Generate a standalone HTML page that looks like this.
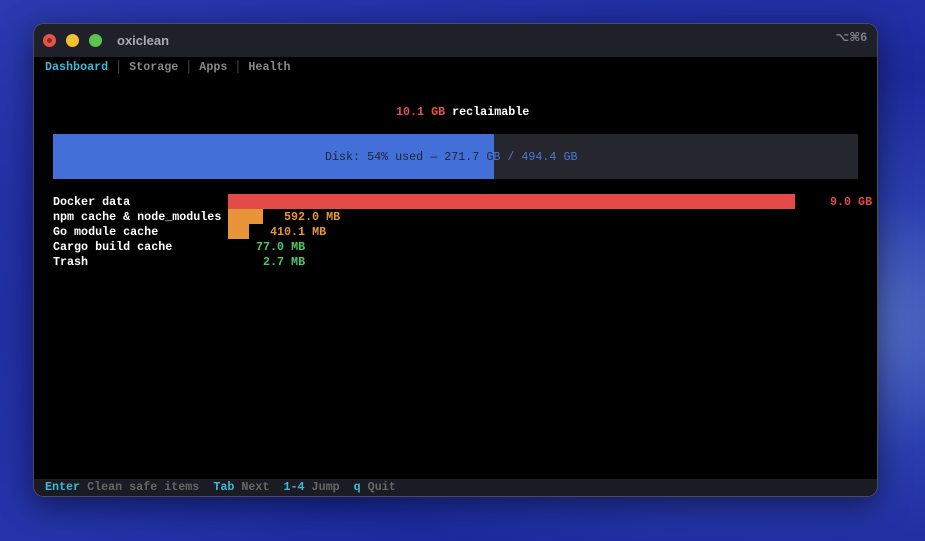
<!DOCTYPE html>
<html><head><meta charset="utf-8"><style>
*{margin:0;padding:0;box-sizing:border-box}
body{width:925px;height:541px;overflow:hidden;position:relative;
background:radial-gradient(ellipse at 85% 60%,#5a78c8 0%,#2a3cae 30%,#1c2a9e 55%,#2b3ab0 100%);
font-family:"Liberation Mono",monospace;font-size:11.7px;}
.win{position:absolute;left:33px;top:23px;width:845px;height:474px;border-radius:11px;background:#000;overflow:hidden;border:1px solid #4a4d5a;box-shadow:0 8px 30px rgba(0,0,0,.5)}
.tb{position:absolute;left:0;top:0;width:100%;height:33px;background:#1f2029}
.dot{position:absolute;top:10px;width:13px;height:13px;border-radius:50%}
.t{position:absolute;white-space:pre;line-height:15px;font-weight:bold}
.sb{position:absolute;left:0;top:455px;width:100%;height:18px;background:#1b1c23}
.bar{position:absolute}
</style></head><body>
<div class="win">
 <div class="tb">
  <div class="dot" style="left:9px;background:#e5534b"><div style="position:absolute;left:4px;top:4px;width:5px;height:5px;border-radius:50%;background:#8c2a26"></div></div>
  <div class="dot" style="left:32px;background:#f2c12e"></div>
  <div class="dot" style="left:55px;background:#5bc44f"></div>
  <div class="t" style="left:83px;top:9px;color:#a8aab4;font-family:'Liberation Sans',sans-serif;font-size:13px">oxiclean</div>
  <div class="t" style="right:10px;top:6px;color:#7c7f8a;font-family:'Liberation Sans','DejaVu Sans',sans-serif;font-size:12px">⌥⌘6</div>
 </div>
 <div class="t" style="left:11px;top:36px;color:#888"><span style="color:#3fb8d6">Dashboard</span> <span style="color:#555;font-weight:normal">│</span> Storage <span style="color:#555;font-weight:normal">│</span> Apps <span style="color:#555;font-weight:normal">│</span> Health</div>
 <div class="t" style="left:362px;top:81px;color:#fff"><span style="color:#e5534b">10.1 GB</span> reclaimable</div>
 <div class="bar" style="left:19px;top:110px;width:805px;height:45px;background:#25262e"></div>
 <div class="t" style="left:291px;top:126px;color:#4a78d8;font-weight:normal">Disk: 54% used — 271.7 GB / 494.4 GB</div>
 <div class="bar" style="left:19px;top:110px;width:441px;height:45px;background:#4270d8;overflow:hidden">
  <div class="t" style="left:272px;top:16px;color:#1f2535;font-weight:normal">Disk: 54% used — 271.7 GB / 494.4 GB</div>
 </div>
 <div class="t" style="left:19px;top:171px;color:#fff">Docker data<br>npm cache &amp; node_modules<br>Go module cache<br>Cargo build cache<br>Trash</div>
 <div class="bar" style="left:194px;top:170px;width:567px;height:15px;background:#e24b47"></div>
 <div class="bar" style="left:194px;top:185px;width:35px;height:15px;background:#e8953a"></div>
 <div class="bar" style="left:194px;top:200px;width:21px;height:15px;background:#e8953a"></div>
 <div class="t" style="left:796px;top:171px;color:#e24b47">9.0 GB</div>
 <div class="t" style="left:250px;top:186px;color:#e8953a">592.0 MB</div>
 <div class="t" style="left:236px;top:201px;color:#e8953a">410.1 MB</div>
 <div class="t" style="left:222px;top:216px;color:#4fc86a">77.0 MB</div>
 <div class="t" style="left:229px;top:231px;color:#4fc86a">2.7 MB</div>
 <div class="sb"></div>
 <div class="t" style="left:11px;top:456px;color:#666"><span style="color:#3fb8d6">Enter</span> Clean safe items  <span style="color:#3fb8d6">Tab</span> Next  <span style="color:#3fb8d6">1-4</span> Jump  <span style="color:#3fb8d6">q</span> Quit</div>
</div>
</body></html>
